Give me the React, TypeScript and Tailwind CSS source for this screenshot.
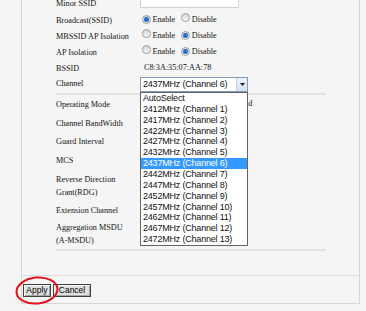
import React from "react";

const serif = { fontFamily: '"Liberation Serif", "Times New Roman", serif' };
const sans = { fontFamily: '"Liberation Sans", Arial, sans-serif' };

function Radio({ checked }: { checked?: boolean }) {
  return (
    <span className="inline-flex w-[9px] h-[9px] shrink-0 items-center justify-center rounded-full border border-[#9c9c9c] bg-linear-to-b from-[#d6d6d6] to-[#fbfbfb]">
      {checked && (
        <span className="block w-[5px] h-[5px] rounded-full bg-[#2f6fc2] shadow-[0_0_1px_#8fb8ea]" />
      )}
    </span>
  );
}

function EnableDisable({ enabled }: { enabled: boolean }) {
  return (
    <div className="flex items-center">
      <span className="ml-[2px]">
        <Radio checked={enabled} />
      </span>
      <span className="ml-[1.5px]">Enable</span>
      <span className="ml-[6px]">
        <Radio checked={!enabled} />
      </span>
      <span className="ml-[1.5px]">Disable</span>
    </div>
  );
}

const channels = [
  "AutoSelect",
  "2412MHz (Channel 1)",
  "2417MHz (Channel 2)",
  "2422MHz (Channel 3)",
  "2427MHz (Channel 4)",
  "2432MHz (Channel 5)",
  "2437MHz (Channel 6)",
  "2442MHz (Channel 7)",
  "2447MHz (Channel 8)",
  "2452MHz (Channel 9)",
  "2457MHz (Channel 10)",
  "2462MHz (Channel 11)",
  "2467MHz (Channel 12)",
  "2472MHz (Channel 13)",
];

function Row({
  label,
  h,
  children,
}: {
  label: React.ReactNode;
  h: string;
  children?: React.ReactNode;
}) {
  return (
    <div className={`flex items-center ${h}`}>
      <div className="w-[84px] shrink-0 leading-[13px]">{label}</div>
      <div className="flex-1 flex items-center relative">{children}</div>
    </div>
  );
}

export default function App() {
  return (
    <div
      className="w-[366px] h-[311px] overflow-hidden bg-[#f4f4f4] text-[8.2px] text-[#141414]"
      style={serif}
    >
      <div className="ml-[21px] w-[339px] border-l border-r border-b border-[#d6d6d6] bg-[#f5f5f5]">
        <div className="pl-[34px] -mt-[4px] pb-[24px]">
          <div className="w-[270px]">
            <div className="flex items-center h-[16px]">
              <div className="w-[84px] shrink-0">Minor SSID</div>
              <div className="w-[99px] h-[16px] -mt-[8px] border border-[#d2d2d2] bg-white" />
            </div>
            <Row label="Broadcast(SSID)" h="h-[16px]">
              <EnableDisable enabled />
            </Row>
            <Row label="MBSSID AP Isolation" h="h-[16px]">
              <EnableDisable enabled={false} />
            </Row>
            <Row label="AP Isolation" h="h-[16px]">
              <EnableDisable enabled={false} />
            </Row>
            <Row label="BSSID" h="h-[16px]">
              <span className="ml-[4px]">C8:3A:35:07:AA:78</span>
            </Row>
            <div className="flex h-[16px]">
              <div className="w-[84px] shrink-0 flex items-center">Channel</div>
              <div className="relative mt-[1px]">
                <div
                  className="flex w-[108px] h-[15px] border border-[#7f9db9] bg-white"
                  style={sans}
                >
                  <div className="flex-1 pl-[2px] text-[9px] tracking-[-0.2px] leading-[13px] text-[#111]">
                    2437MHz (Channel 6)
                  </div>
                  <div className="w-[11px] flex items-center justify-center bg-linear-to-b from-[#eef3fa] to-[#d6e2f2] border-l border-[#b9cbe3]">
                    <svg width="5" height="3" viewBox="0 0 5 3">
                      <path d="M0 0 H5 L2.5 3 Z" fill="#1a1a1a" />
                    </svg>
                  </div>
                </div>
                <div
                  className="absolute left-0 top-[15px] z-10 w-[108px] border border-[#646464] bg-white"
                  style={sans}
                >
                  {channels.map((c) => (
                    <div
                      key={c}
                      className={`h-[10.86px] leading-[10.86px] pl-[2px] text-[9px] tracking-[-0.2px] whitespace-nowrap ${
                        c === "2437MHz (Channel 6)"
                          ? "bg-[#3399ff] text-white"
                          : "text-[#111]"
                      }`}
                    >
                      {c}
                    </div>
                  ))}
                </div>
              </div>
            </div>
            <div className="h-[2px] mt-[1px] bg-[#e3e3e3]" />
            <Row label="Operating Mode" h="h-[19px]">
              <div className="flex items-center">
                <span className="ml-[2px]">
                  <Radio checked />
                </span>
                <span className="ml-[1.5px]">Mixed Mode</span>
                <span className="ml-[8px]">
                  <Radio />
                </span>
                <span className="ml-[1.5px] text-[#111]">Green Field</span>
              </div>
            </Row>
            <Row label="Channel BandWidth" h="h-[18px]" />
            <Row label="Guard Interval" h="h-[19px]" />
            <Row label="MCS" h="h-[19px]" />
            <Row
              label={
                <>
                  Reverse Direction
                  <br />
                  Grant(RDG)
                </>
              }
              h="h-[31px]"
            />
            <Row label="Extension Channel" h="h-[18px]" />
            <Row
              label={
                <>
                  Aggregation MSDU
                  <br />
                  (A-MSDU)
                </>
              }
              h="h-[30px]"
            />
            <div className="h-[2px] bg-[#e3e3e3]" />
          </div>
        </div>
        <div className="relative h-[28px] border-t border-[#dcdcdc] pl-[1px] pt-[8px] flex items-start gap-[2px]">
          <button
            className="w-[28px] h-[13px] border border-[#3f3f3f] bg-[#e0e0e0] text-[8.5px] leading-[11px] text-black shadow-[inset_1px_1px_0_#fbfbfb,inset_-1px_-1px_0_#a8a8a8]"
            style={sans}
          >
            Apply
          </button>
          <button
            className="w-[38px] h-[13px] border border-[#3f3f3f] bg-[#e0e0e0] text-[8.5px] leading-[11px] text-black shadow-[inset_1px_1px_0_#fbfbfb,inset_-1px_-1px_0_#a8a8a8]"
            style={sans}
          >
            Cancel
          </button>
          <svg
            className="absolute left-[-8px] top-0 pointer-events-none"
            width="46"
            height="30"
            viewBox="0 0 46 30"
          >
            <ellipse
              cx="23"
              cy="14.5"
              rx="20.5"
              ry="13"
              transform="rotate(-6 23 14.5)"
              fill="none"
              stroke="#e3141b"
              strokeWidth="2"
            />
          </svg>
        </div>
      </div>
    </div>
  );
}
